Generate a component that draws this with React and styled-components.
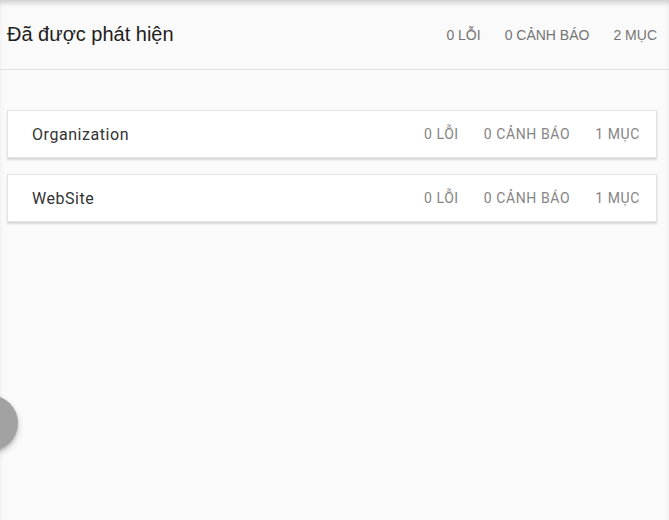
import React from "react";
import styled, { createGlobalStyle } from "styled-components";

const Global = createGlobalStyle`
  html, body { margin: 0; padding: 0; background: #fafafa; }
  body { font-family: "Liberation Sans", Arial, sans-serif; }
`;

const Page = styled.div`
  position: relative;
  width: 669px;
  height: 520px;
  overflow: hidden;
  background: #fafafa;
  box-shadow: inset 0 5px 6px -3px rgba(0, 0, 0, 0.22);
`;

const Header = styled.div`
  display: flex;
  align-items: center;
  justify-content: space-between;
  height: 69px;
  padding: 0 12px 0 7px;
  border-bottom: 1px solid #e0e0e0;
`;

const Title = styled.h1`
  margin: 0;
  font-family: "Liberation Sans", Arial, sans-serif;
  font-weight: 400;
  font-size: 20px;
  color: #212121;
`;

const Stats = styled.div`
  display: flex;
  gap: ${(p) => p.$gap}px;
  font-family: ${(p) => p.$font};
  font-size: 14px;
  letter-spacing: ${(p) => p.$ls}px;
  color: ${(p) => p.$color};
`;

const List = styled.div`
  display: flex;
  flex-direction: column;
  gap: 16px;
  padding: 40px 12px 0 7px;
`;

const Card = styled.div`
  display: flex;
  align-items: center;
  justify-content: space-between;
  height: 46px;
  padding: 0 16px 0 24px;
  background: #fff;
  border: 1px solid #e4e4e4;
  box-shadow: 0 2px 2px rgba(0, 0, 0, 0.14);
`;

const Name = styled.div`
  font-family: Roboto, "Liberation Sans", sans-serif;
  font-size: 16px;
  letter-spacing: 0.55px;
  color: #333;
`;

const Fab = styled.div`
  position: absolute;
  left: -38px;
  top: 395px;
  width: 56px;
  height: 56px;
  border-radius: 50%;
  background: #a2a2a2;
  box-shadow: 0 3px 6px rgba(0, 0, 0, 0.2), 0 2px 3px rgba(0, 0, 0, 0.12);
`;

const items = ["Organization", "WebSite"];

export default function App() {
  return (
    <Page>
      <Global />
      <Header>
        <Title>Đã được phát hiện</Title>
        <Stats $gap={24} $ls={0} $color="#757575" $font={`"Liberation Sans", Arial, sans-serif`}>
          <span>0 LỖI</span>
          <span>0 CẢNH BÁO</span>
          <span>2 MỤC</span>
        </Stats>
      </Header>
      <List>
        {items.map((n) => (
          <Card key={n}>
            <Name>{n}</Name>
            <Stats $gap={25} $ls={0.6} $color="#858585" $font={`Roboto, "Liberation Sans", sans-serif`}>
              <span>0 LỖI</span>
              <span>0 CẢNH BÁO</span>
              <span>1 MỤC</span>
            </Stats>
          </Card>
        ))}
      </List>
      <Fab />
    </Page>
  );
}
